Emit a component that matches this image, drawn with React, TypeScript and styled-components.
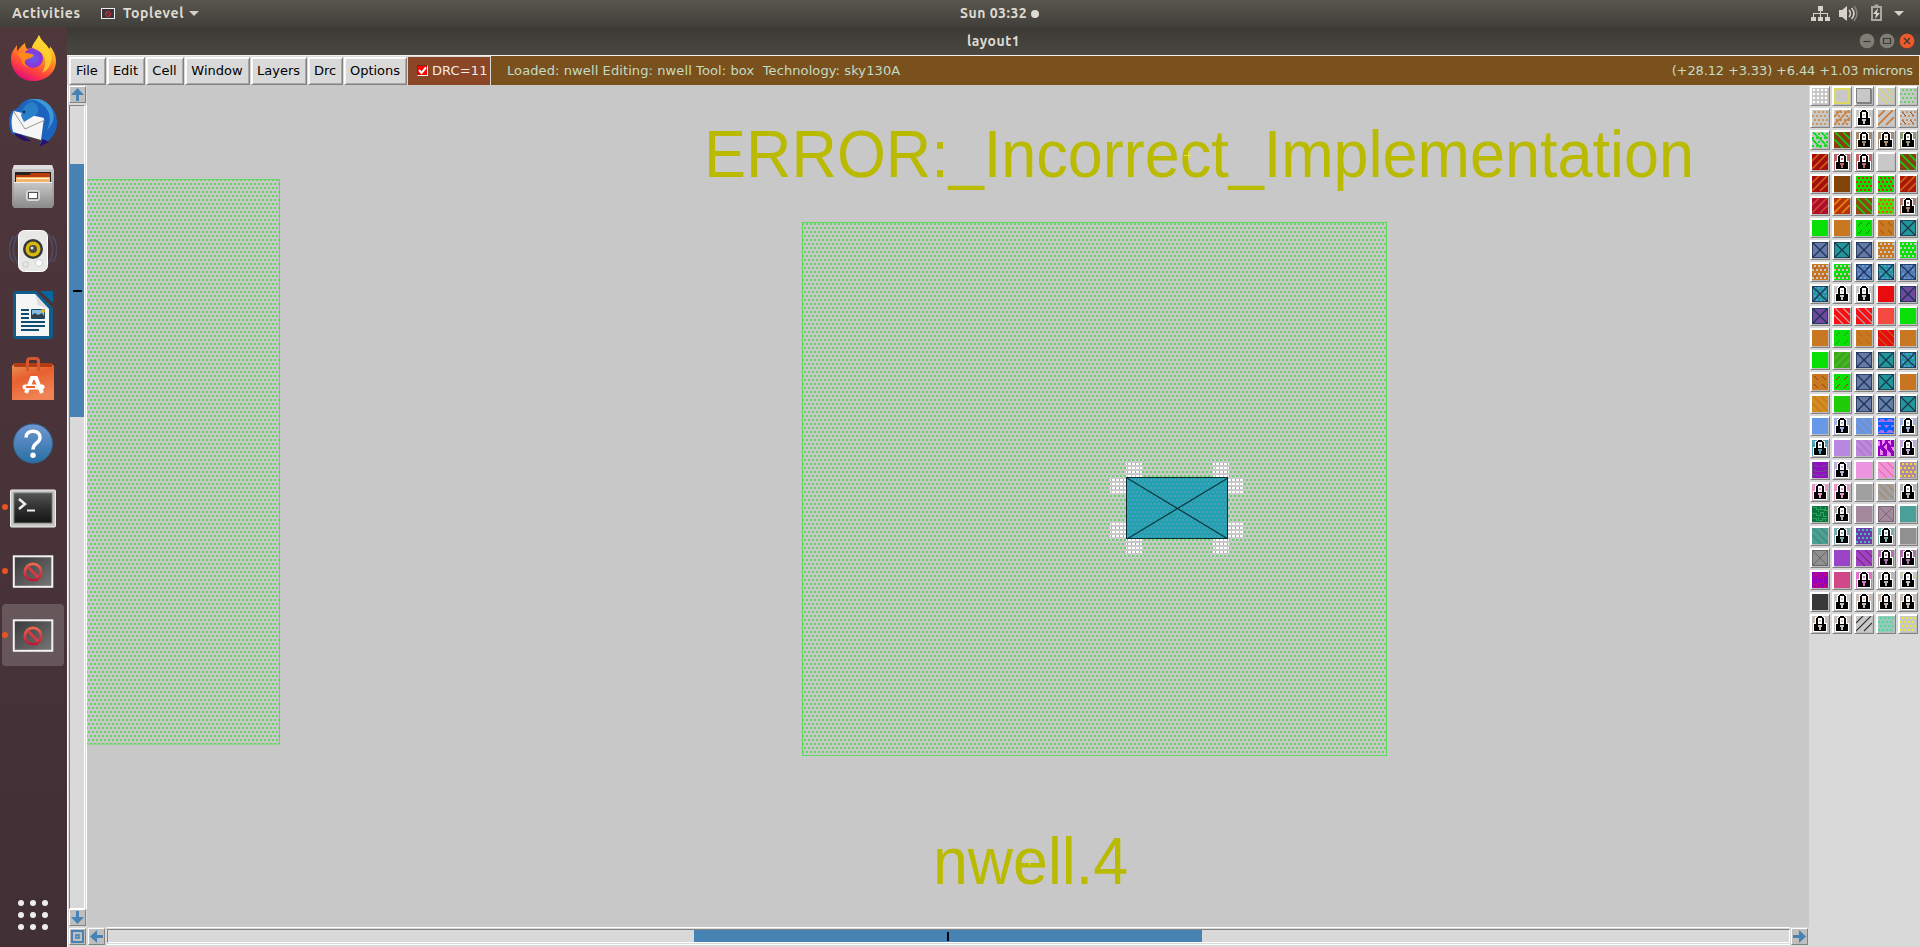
import React from 'react';
import styled, { createGlobalStyle } from 'styled-components';

const Global = createGlobalStyle`
  * { box-sizing: border-box; }
  html, body { margin: 0; padding: 0; overflow: hidden; background: #c8c8c8; }
  svg { display: block; }
`;

const Desktop = styled.div`
  width: 1920px; height: 947px; display: flex; flex-direction: column; overflow: hidden;
  font-family: "DejaVu Sans", sans-serif;
`;
const TopBar = styled.header`
  height: 27px; flex: none; display: grid; grid-template-columns: 960px 1fr auto; align-items: center;
  background: linear-gradient(#59564e, #413f3a);
  color: #dfdbd2; font: 600 14px/27px "Ubuntu", "Noto Sans", sans-serif; white-space: pre;
`;
const TopLeft = styled.div`display: flex; align-items: center; padding-left: 12px;`;
const Label = styled.span<{ $w: number; $ls?: number }>`
  width: ${p => p.$w}px; letter-spacing: ${p => p.$ls ?? 0}px;
`;
const AppIcon = styled.span`
  width: 14px; height: 11px; margin: 0 8px 0 21px; border: 1px solid #eee; background: #3a3436;
  display: grid; place-items: center;
`;
const Caret = styled.span`
  border: 5px solid transparent; border-top-color: #d3cfc6; border-bottom: 0; margin-left: 5px;
`;
const Clock = styled.div`display: flex; align-items: center;`;
const Dot = styled.span`width: 8px; height: 8px; border-radius: 50%; background: #dfdbd2; margin-left: 2px;`;

const Body = styled.div`flex: 1; min-height: 0; display: flex;`;
const Dock = styled.nav`
  width: 67px; flex: none; display: flex; flex-direction: column; align-items: center;
  background: linear-gradient(#4f373b, #412f36); padding: 1px 1px 17px 0;
`;
const DockSlot = styled.div<{ $active?: boolean }>`
  width: 62px; height: 62px; margin: 0 0 2px; position: relative; display: grid; place-items: center;
  border-radius: 4px; background: ${p => (p.$active ? 'rgba(255,255,255,.18)' : 'transparent')};
  & > i { position: absolute; left: 0; top: 28px; width: 6px; height: 6px; border-radius: 50%; background: #e95420; }
`;
const AppsGrid = styled.div`
  margin-top: auto; display: grid; grid-template-columns: repeat(3, 6px); gap: 6px;
  & > b { width: 6px; height: 6px; border-radius: 50%; background: #eeeeec; }
`;

const Win = styled.main`flex: 1; display: flex; flex-direction: column; background: #d9d9d9;`;
const TitleBar = styled.div`
  height: 28px; flex: none; display: grid; grid-template-columns: 1fr 120px 1fr; align-items: center;
  background: linear-gradient(#3a3935, #4a4842); color: #dfdbd2;
  font: 600 14px/28px "Ubuntu", "Noto Sans", sans-serif; text-align: center; letter-spacing: .5px;
`;
const WinButtons = styled.div`display: flex; justify-content: flex-end; gap: 4px; padding-right: 5px;`;
const MenuBar = styled.div`
  height: 30px; flex: none; display: flex; border-top: 1px solid #f2f2f2; padding: 0 1px 0 2px;
  font-size: 13px; color: #000;
`;
const MenuButton = styled.div<{ $w: number }>`
  width: ${p => p.$w}px; height: 28px; line-height: 25px; text-align: center; margin: 1px 1px 0 0; padding-right: 1px;
  border: 1px solid; border-color: #fff #828282 #828282 #fff; box-shadow: inset 1px 1px #f6f6f6, inset -1px -1px #a8a8a8;
`;
const Drc = styled.div`
  width: 83px; height: 28px; margin: 1px 0 0; display: flex; align-items: center; gap: 4px; padding: 0 0 2px 9px;
  background: #8b4626; color: #f4ece6; white-space: nowrap; border-right: 1px solid #d9d9d9; letter-spacing: .1px;
`;
const CheckBox = styled.span`
  width: 11px; height: 11px; background: #f00; border: 1px solid; border-color: #842222 #eee #eee #842222;
`;
const Status = styled.div`
  flex: 1; display: flex; justify-content: space-between; align-items: center; padding: 0 6px 1px 16px;
  background: #7a511c; color: #c3dcc8; white-space: pre;
`;
const StatusText = styled.span<{ $ls: number }>`letter-spacing: ${p => p.$ls}px;`;

const Work = styled.div`flex: 1; min-height: 0; display: flex;`;
const Editor = styled.div`
  width: 1742px; display: grid; grid-template-columns: 20px 1722px; grid-template-rows: 842px 20px;
`;
const VScroll = styled.div`
  display: flex; flex-direction: column; padding: 1px 0 0 1px; align-items: flex-start; border-left: 1px solid #fff;
`;
const HScroll = styled.div`display: flex; padding: 1px 0 0 1px;`;
const Corner = styled.div`padding: 1px 0 0 1px; border-left: 1px solid #fff; background: #d9d9d9;`;
const ScrollButton = styled.div`
  width: 17px; height: 17px; flex: none; background: #bebebe;
  border: 1px solid; border-color: #fff #828282 #828282 #fff; display: grid; place-items: center;
`;
const VTrough = styled.div`
  width: 18px; height: 804px; margin-top: 2px; border: 1px solid #fff; border-width: 0 1px 0 0; padding-right: 1px;
`;
const HTrough = styled.div`
  width: 1683px; height: 18px; margin: -1px 1px 0 2px; border: 1px solid #fff; border-width: 1px 0; padding-top: 1px; padding-bottom: 1px;
`;
const Sunken = styled.div<{ $row?: boolean }>`
  width: 100%; height: 100%; display: flex; flex-direction: ${p => (p.$row ? 'row' : 'column')};
  border: 1px solid; border-color: #828282 #fff #fff #828282;
`;
const Thumb = styled.div<{ $before: number; $size: number; $row?: boolean }>`
  display: grid; place-items: center; background: #4682b4; flex: none;
  ${p => (p.$row
    ? `width:${p.$size}px;height:100%;margin-left:${p.$before}px;`
    : `height:${p.$size}px;width:100%;margin-top:${p.$before}px;`)}
  & > u { background: #000; width: ${p => (p.$row ? 2 : 9)}px; height: ${p => (p.$row ? 9 : 2)}px; }
`;
const Palette = styled.aside`
  padding: 1px 0 0 1px; display: grid; grid-template-columns: repeat(5, 20px); grid-auto-rows: 20px;
  gap: 2px; align-content: start;
`;
const Swatch = styled.div`
  width: 20px; height: 20px; padding: 1px; background: #dedede;
  border: 1px solid; border-color: #fff #828282 #828282 #fff; box-shadow: inset 1px 1px #fff, inset -1px -1px #bcbcbc;
`;

/* Layer codes: kind, fill colour, pattern colour.
   p plain, d dots, h holes, / and \\ stripes, s and b sparse stripes, x contact, y dotted contact, l lock, f frame */
const G = '#c8c8c8', GR = '#08e008', OR = '#c87820', SL = '#6878a8', TE = '#209898', BR = '#884010';
type Cell = [string, string, string?];
const layers: Cell[] = [
  ['D', G, '#fff'], ['f', G, '#dcd860'], ['f', G, '#808080'], ['\\', G, '#dcd860'], ['d', G, '#60d868'],
  ['d', G, '#cc965c'], ['/d', G, '#cc8444'], ['l', G, '#c8c890'], ['/', G, '#c87830'], ['bd', G, '#cc9468'],
  ['\\d', G, '#10dc20'], ['\\', BR, '#10d010'], ['l', '#a08870'], ['l', '#a88c70'], ['l', '#909c78'],
  ['/', '#a80c0c', '#c86418'], ['l', '#bc6468'], ['l', '#bc6468'], ['p', G], ['\\', BR, '#10d010'],
  ['/', '#a80c0c', '#c86418'], ['p', '#844408'], ['d', GR, '#e82010'], ['bd', GR, '#e82010'], ['/', '#ac1808', '#c86418'],
  ['/', '#b00c28', '#c84838'], ['/', '#b83408', '#e08818'], ['\\', '#904810', '#10d010'], ['d', '#48e008', '#f05018'], ['l', '#b07c74'],
  ['p', GR], ['p', OR], ['s', GR, '#287808'], ['b', OR, '#a04c10'], ['x', TE],
  ['x', SL], ['x', TE], ['x', SL], ['h', OR, G], ['h', GR, G],
  ['hs', OR, G], ['hs', GR, G], ['y', '#5878b0'], ['y', TE], ['y', '#5878b0'],
  ['y', TE], ['l', G], ['l', G], ['p', '#e80c10'], ['x', '#7048a0'],
  ['x', '#7048a0'], ['\\', '#f81010', '#d8a8b0'], ['\\', '#f81010', '#b8a8c0'], ['p', '#f44a40'], ['p', GR],
  ['p', OR], ['s', GR, '#20a010'], ['b', OR, '#b46018'], ['\\', '#e80c10', '#c06010'], ['p', OR],
  ['p', GR], ['/', '#40a420', '#44c020'], ['x', SL], ['x', TE], ['y', TE],
  ['b', OR, '#904010'], ['s', GR, '#883000'], ['x', SL], ['x', TE], ['p', '#c87420'],
  ['\\', '#d48c20', '#c07820'], ['p', '#20cc08'], ['x', SL], ['x', '#6480a8'], ['x', TE],
  ['p', '#6898e8'], ['l', '#a0b4e0'], ['\\', '#6898e8', '#8088a8'], ['t', '#0860ff', '#a070e8'], ['l', '#a0b4e0'],
  ['l', '#48a0b0', '#a0a0e8'], ['p', '#b888e0'], ['\\', '#b888e0', '#bc70b4'], ['v', '#9000c0', '#ec88f0'], ['l', '#c0a8d8'],
  ['w', '#9010c0', '#704890'], ['l', '#c0b0d8'], ['p', '#ec94e0'], ['\\', '#ec94e0', '#f07090'], ['d', '#b088a8', '#e8e020'],
  ['l', '#e898c8'], ['l', '#e898c8'], ['p', '#a0a0a0'], ['\\', '#a0a0a0', '#a88864'], ['l', '#b4b4b4'],
  ['n', '#087838', '#30a068'], ['l', '#b0b0b0'], ['p', '#a4889c'], ['X', '#a4889c', '#7c6878'], ['p', '#48a098'],
  ['\\', '#48a098', '#508460'], ['l', '#78b0b0'], ['d', '#7038b0', '#40c0a8'], ['l', '#78b0b0'], ['p', '#909090'],
  ['X', '#909090', '#686868'], ['p', '#9c44c8'], ['\\', '#9c44c8', '#902070'], ['l', '#b070b0'], ['l', '#b070b0'],
  ['o', '#9800b8', '#c00880'], ['p', '#d04888'], ['l', '#e070c8'], ['l', '#b8b8b8'], ['l', G, '#d8d840'],
  ['p', '#383838'], ['l', G], ['l', '#c8bcb4'], ['l', '#c8bcb4'], ['l', '#c8bcb4'],
  ['l', '#c8c0b8'], ['l', '#c8c0b8'], ['/', G, '#303030'], ['d', '#98c8b8', '#50d8a0'], ['d', G, '#e8e830'],
];
const boldInks = ['#10d010', '#c86418', '#e08818', '#c84838', '#c87830', '#cc8444', '#10dc20', '#44c020'];

function LayerIcon({ cell: [kind, fill, ink] }: { cell: Cell }) {
  const k = kind;
  const line = boldInks.includes(ink ?? '') ? 1.7 : 1.1;
  const dots: React.ReactNode[] = [];
  const full = k.includes('D');
  if (full || k.includes('d') || k === 'y' || k.includes('h')) {
    const c = k === 'y' ? '#5898e8' : ink;
    for (let r = 0; r < 4; r++)
      for (let i = 0; i < 4; i++)
        dots.push(<rect key={`${r}-${i}`} x={i * 4 + (full ? 1 : r % 2 ? 0 : 2)} y={r * 4 + 1} width="2" height="2" fill={c} />);
  }
  if (k === 'l')
    return (
      <svg width="16" height="16" shapeRendering="crispEdges">
        <rect width="16" height="16" fill={fill} />
        {ink && <path d="M1 1l3 3M12 12l4 4M12 2l4 4" stroke={ink} />}
        <path d="M5 0h6v1h2v6h2v9H1V7h2V1h2z" fill="#fff" />
        <path d="M6 0h4v1h1v1h1v6h2v7H2V8h2V2h1V1h1zM6 2v6h4V2z" fill="#000" fillRule="evenodd" />
        <path d="M6 2h4v6H6z" fill="#fff" />
        <path d="M7 4h2v2H7zM6 9h4v2H9v3H7v-3H6z" fill={fill} />
      </svg>
    );
  return (
    <svg width="16" height="16" shapeRendering="crispEdges">
      <rect width="16" height="16" fill={fill} />
      {dots}
      {k === 'f' && <path d={ink === '#808080' ? 'M.5 .5h14v14h-14zM15.5 1v15M1 15.5h15' : 'M1 1h14v14H1z'} fill="none" stroke={ink} strokeWidth={ink === '#808080' ? 1 : 2} />}
      <g shapeRendering="auto">
        {k.includes('/') && <path d="M0 7L7 0M0 15L15 0M8 15l8-8" stroke={ink} strokeWidth={line} />}
        {k.includes('\\') && <path d="M9 0l7 7M1 0l15 15M0 7l9 9" stroke={ink} strokeWidth={line} />}
        {k.includes('s') && <path d="M2 6l4-4M10 6l4-4M2 14l4-4M10 14l4-4" stroke={k === 'hs' ? '#b84840' : ink} />}
        {k.includes('b') && <path d="M2 2l4 4M10 2l4 4M2 10l4 4M10 10l4 4" stroke={k === 'bd' ? '#a04c20' : ink} />}
        {(k === 'x' || k === 'y') && <path d="M0 0L16 16M16 0L0 16" fill="none" stroke="#1c3454" strokeWidth="1.300" />}
      </g>
      {(k === 'x' || k === 'y') && <path d="M.5 .5h15v15H.5z" fill="none" stroke="#1c3454" strokeOpacity=".8" />}
      {k === 'X' && <path d="M0 0L16 16M16 0L0 16M.5 .5h15v15H.5z" fill="none" stroke={ink} />}
      {k === 't' && <path d="M2 1h4l2 3H0zM10 1h4l2 3H8zM0 7h3v2H0zM5 7h6l-3 3zM13 7h3v2h-3zM2 12h4l1 3H0zM10 12h4l2 3H8z" fill={ink} />}
      {k === 'v' && <path d="M0 1h2v5H0zM4 0h3v2l-2 3H4zM10 1l3-1v6l-3-3zM6 6l3-2v6L6 8zM2 9l3 3v3H2zM9 10l4 3v3H9zM13 7h3v5z" fill={ink} />}
      {k === 'w' && <path d="M0 3h5v1h6v-1h5M0 8h3v1h9v-1h4M0 12h5v1h6v-1h5M.5 0v16" stroke={ink} fill="none" />}
      {k === 'n' && <path d="M1 1h3v2h2v3M8 0v3h4v2M13 1v3h3M0 7h4v2h4V6h3v4h4M1 12h3v3M6 11v3h4v-2h3v3" stroke={ink} fill="none" />}
      {k === 'o' && <path d="M5 5h6v6H5zM1 1h3v2H1zM12 1h3v2h-3zM1 12h3v3H1zM12 12h3v3h-3zM7 1h2v1H7zM7 14h2v1H7z" stroke={ink} fill="none" />}
    </svg>
  );
}

const Firefox = () => (
  <svg width="48" height="48" viewBox="0 0 48 48">
    <defs>
      <linearGradient id="fx" x1=".8" y1="0" x2=".3" y2="1"><stop offset="0" stopColor="#fff44f" /><stop offset=".4" stopColor="#ff9a20" /><stop offset=".75" stopColor="#ff4040" /><stop offset="1" stopColor="#e00a80" /></linearGradient>
      <radialGradient id="fp"><stop offset="0" stopColor="#6060f0" /><stop offset="1" stopColor="#9030d0" /></radialGradient>
    </defs>
    <path d="M30 0c2 6 8 9 10 14 2-1 1-3 1-3 4 5 6 10 6 15 0 12-10 20-23 20S2 36 2 23C2 17 6 13 8 10v6c2-2 5-6 8-8 0 3 1 4 2 6l5-1C24 8 28 5 30 0z" fill="url(#fx)" />
    <circle cx="24" cy="23" r="10" fill="url(#fp)" />
    <path d="M8 19c5-3 11-1 17 1-2 4-7 3-9 6-1 3 2 6 6 7-7-1-10-5-10-10z" fill="#ff8a18" />
    <path d="M30 0c1 7 10 10 12 18 2 9-2 17-9 20 5-8 4-17-2-21-3-2-5-3-8-4C24 8 28 5 30 0z" fill="#ffd730" opacity=".8" />
  </svg>
);
const Thunderbird = () => (
  <svg width="48" height="48" viewBox="0 0 48 48">
    <path d="M10 8C14 0 24-2 29 2c12 1 20 10 19 24-1 8-5 13-10 17l-8 4 3-7L3 35C-1 27-1 18 3 12z" fill="#1d62bd" />
    <path d="M17 4c4-4 10-4 14 0 9 5 13 15 7 27 10-9 8-21-1-28C29-2 21-1 17 4z" fill="#3a98d8" />
    <path d="M5 12l17 4 13 3-3 22L4 33C2 25 2 18 5 12z" fill="#f6f6f6" />
    <path d="M5 13l11 17 20-9" fill="none" stroke="#999" />
    <path d="M5 34c4 6 10 9 17 8l-9-6zM34 40l-4 8 10-5z" fill="#28106a" />
    <path d="M12 16C14 8 18 3 24 3c4 2 7 7 4 12l-13 8-2-4z" fill="#2a80c8" />
    <circle cx="15" cy="13" r="1.4" fill="#143060" />
  </svg>
);
const Files = () => (
  <svg width="48" height="48" viewBox="0 0 48 48">
    <defs><linearGradient id="fl" x1="0" y1="0" x2="0" y2="1"><stop offset="0" stopColor="#c9c9c9" /><stop offset="1" stopColor="#8c8c8c" /></linearGradient></defs>
    <path d="M5 2h38l2 5v35l-2 3H5l-2-3V7z" fill="url(#fl)" /><path d="M5 2h38l1 4H4z" fill="#ddd" />
    <path d="M6 9h36v10H6z" fill="#292020" /><path d="M7 12h14l1-2h19v8H7z" fill="#b83c0c" /><path d="M7 14h34v5H7z" fill="#f5b46a" /><path d="M8 15h32v1H8z" fill="#fff2d0" />
    <path d="M5 19h38v25H5z" fill="url(#fl)" /><path d="M5 19h38v1H5z" fill="#eee" />
    <rect x="17.5" y="27.5" width="13" height="10" rx="2" fill="#c8c8c8" stroke="#ddd" /><rect x="19.5" y="29.5" width="9" height="6" fill="#fff" stroke="#555" />
  </svg>
);
const Rhythmbox = () => (
  <svg width="48" height="48" viewBox="0 -1 48 48">
    <path d="M5 8C-2 17-1 28 5 34M9 6C3 16 3 27 9 36M43 8c7 9 6 20 0 26M39 6c6 10 6 21 0 30" fill="none" stroke="#5874a8" strokeWidth="2" opacity=".35" />
    <rect x="9.5" y="2.5" width="29" height="41" rx="6" fill="#e8e8e6" stroke="#fff" />
    <circle cx="24" cy="21" r="10" fill="#363838" /><circle cx="24" cy="21" r="7.5" fill="#d8b80c" /><circle cx="24" cy="21" r="4" fill="#4a493c" /><circle cx="23" cy="20" r="1.5" fill="#ddd" />
    <circle cx="30" cy="35" r="3.5" fill="#fff" stroke="#ccc" /><rect x="14" y="34" width="5" height="5" rx="1" fill="none" stroke="#ccc" />
  </svg>
);
const Writer = () => (
  <svg width="48" height="48" viewBox="0 0 48 48">
    <path d="M6 0h21l17 17v29l-2 2H6l-2-2V2z" fill="#0e5d8c" /><path d="M31 0h13v12z" fill="#05679f" /><path d="M7 3h19l14 15v27H7z" fill="#f5f5f5" /><path d="M26 3l14 15-11-4z" fill="#ddd" />
    <path d="M12 19h8M12 23h8M12 27h8M12 31h24M12 35h24M12 39h18" stroke="#104c70" strokeWidth="2" />
    <path d="M22.500 18.500h13v9h-13z" fill="#88bce0" stroke="#104c70" /><path d="M23 27v-3l3-2 3 2 4-2 3 5z" fill="#33424a" /><circle cx="34" cy="20" r="2" fill="#f0b028" />
  </svg>
);
const Software = () => (
  <svg width="48" height="48" viewBox="0 -1 48 48">
    <defs><linearGradient id="sw" x1="0" y1="0" x2=".4" y2="1"><stop offset="0" stopColor="#e89558" /><stop offset=".45" stopColor="#e86030" /><stop offset="1" stopColor="#f18254" /></linearGradient></defs>
    <path d="M3 10l3-3h36l3 3v34H3z" fill="url(#sw)" /><path d="M5 7h38v4H5z" fill="#b43d15" />
    <path d="M18.500 15V5q0-2.500 3-2.500h5q3 0 3 2.500v10" fill="none" stroke="#d4592e" strokeWidth="3" />
    <path d="M17 37l6-15h4l6 15" fill="none" stroke="#fff" strokeWidth="4" /><path d="M16 31h17" stroke="#fff" strokeWidth="5" strokeLinecap="round" /><path d="M17 31h9" stroke="#e8622c" strokeWidth="2" />
  </svg>
);
const Help = () => (
  <svg width="48" height="48" viewBox="0 0 48 48">
    <defs><linearGradient id="hp" x1="0" y1="0" x2="0" y2="1"><stop offset="0" stopColor="#7297d2" /><stop offset="1" stopColor="#2670a3" /></linearGradient></defs>
    <circle cx="24" cy="24.500" r="19.500" fill="url(#hp)" stroke="#356599" />
    <path d="M17 18.500c0-8.500 14-8.500 14 0 0 6-7 5-7 12" fill="none" stroke="#fff" strokeWidth="3.500" /><circle cx="24" cy="36.300" r="2.700" fill="#fff" />
  </svg>
);
const Terminal = () => (
  <svg width="48" height="48" viewBox="0 0 48 48">
    <defs><linearGradient id="tm" x1="0" y1="0" x2="0" y2="1"><stop offset="0" stopColor="#555" /><stop offset=".5" stopColor="#303030" /><stop offset="1" stopColor="#151515" /></linearGradient></defs>
    <rect x="1.500" y="7" width="45" height="37" rx="1" fill="#c8c8c4" stroke="#eee" /><rect x="5" y="10" width="38" height="30" fill="url(#tm)" stroke="#777" />
    <path d="M10 16l6 5-6 5" fill="none" stroke="#eee" strokeWidth="2.500" /><path d="M18 27.500h8" stroke="#eee" strokeWidth="2" />
  </svg>
);
const Blocked = () => (
  <svg width="48" height="48" viewBox="0 0 48 48">
    <defs><linearGradient id="bk" x1="0" y1="0" x2="1" y2="1"><stop offset="0" stopColor="#383838" /><stop offset="1" stopColor="#777" /></linearGradient>
      <linearGradient id="br" x1="0" y1="0" x2="0" y2="1"><stop offset="0" stopColor="#ec6a50" /><stop offset="1" stopColor="#bc1838" /></linearGradient></defs>
    <rect x="4.800" y="9.300" width="38.500" height="30.500" fill="url(#bk)" stroke="#f2f2f2" strokeWidth="2" />
    <circle cx="24" cy="25" r="8.200" fill="none" stroke="url(#br)" strokeWidth="2.800" /><path d="M18.500 19.500l11 11" stroke="#d83a3e" strokeWidth="2.800" />
  </svg>
);

const Arrow = ({ turn }: { turn: number }) => (
  <svg width="15" height="15" viewBox="0 0 15 15"><path d="M7.500 1L14 8H9v6H6V8H1z" fill="#4682b4" transform={`rotate(${turn} 7.500 7.500)`} /></svg>
);

const TrayIcons = styled.div`display: flex; align-items: center; padding-right: 8px;`;
const Tray = () => (
  <TrayIcons>
    <svg width="107" height="27" fill="#d6d2c9">
      <path d="M13 6h5v5h-2v2h7v4h2v4h-5v-4h2v-3h-6v3h2v4h-5v-4h2v-3H9v3h2v4H6v-4h2v-4h7v-2h-2z" />
      <path d="M34 10h3l5-4v15l-5-4h-3z" /><path d="M44 10q3 3.500 0 7M46.500 8q5 5.500 0 11" fill="none" stroke="#d6d2c9" strokeWidth="1.500" /><path d="M49 6q6 7 0 15" fill="none" stroke="#88857d" strokeWidth="1.500" />
      <g transform="translate(2 0)"><path d="M65 7h9v13h-9zM67.500 5.500h4" fill="none" stroke="#aaa79f" strokeWidth="2" /><path d="M71 8l-5 6h3l-1 5 5-6h-3z" /></g>
      <path d="M89 11h10l-5 5z" />
    </svg>
  </TrayIcons>
);

const WindowButton = ({ kind }: { kind: 'min' | 'max' | 'close' }) => (
  <svg width="16" height="16" viewBox="0 0 16 16">
    <circle cx="8" cy="8" r="7.800" fill={kind === 'close' ? '#ea5a2c' : '#807d74'} stroke="#34332f" strokeWidth=".6" />
    <path d={kind === 'min' ? 'M4.500 8.500h7' : kind === 'max' ? 'M4.500 5.500h7v5h-7z' : 'M5 5l6 6M11 5l-6 6'} fill="none" stroke="#3a3833" strokeWidth="1.200" />
  </svg>
);

const Layout = () => (
  <svg width="1722" height="842" viewBox="87 85 1722 842">
    <defs>
      <pattern id="nwell" width="4" height="8" patternUnits="userSpaceOnUse">
        <path d="M0 3h2v2H0zM2 7h2v1H2zM2 0h2v1H2z" fill="#60d860" shapeRendering="crispEdges" />
      </pattern>
      <pattern id="tap" width="4" height="8" patternUnits="userSpaceOnUse">
        <path d="M0 3h2v2H0zM2 7h2v1H2zM2 0h2v1H2z" fill="#469ec8" shapeRendering="crispEdges" />
      </pattern>
      <pattern id="grid" width="4" height="4" patternUnits="userSpaceOnUse">
        <path d="M0 3h2v1H0zM0 0h2v1H0zM2 3h1v1H2zM2 0h1v1H2z" fill="#fff" shapeRendering="crispEdges" />
      </pattern>
    </defs>
    <rect x="87" y="85" width="1722" height="842" fill="#c8c8c8" />
    <g fill="url(#nwell)" stroke="#60d860">
      <rect x="80.500" y="179.500" width="199" height="564.500" />
      <rect x="802.500" y="222.500" width="584" height="533" />
    </g>
    <g fill="url(#grid)">
      {[[1126, 461], [1213, 461], [1126, 539], [1213, 539], [1110, 477], [1228, 477], [1110, 523], [1228, 523]].map(([x, y]) => (
        <rect key={`${x}-${y}`} x={x} y={y} width="16" height="16" />
      ))}
    </g>
    <rect x="1126.500" y="477.500" width="101" height="61" fill="#24a2ac" />
    <rect x="1126.500" y="477.500" width="101" height="61" fill="url(#tap)" stroke="#082c30" />
    <path d="M1127 478l101 61M1228 478l-101 61" stroke="#083c44" strokeWidth="1.300" />
    <g fill="#baba00" fontFamily="Liberation Sans, Arial, sans-serif" fontSize="66.500">
      <text x="704" y="177" textLength="990" lengthAdjust="spacingAndGlyphs">ERROR:_Incorrect_Implementation</text>
      <text x="933" y="883.500" textLength="195" lengthAdjust="spacingAndGlyphs">nwell.4</text>
    </g>
    <path d="M1025 860.500h8M1029.500 857v8M1184 155.500h8M1188.500 151v8" stroke="#e4e440" />
  </svg>
);

const menus: [string, number][] = [['File', 37], ['Edit', 38], ['Cell', 38], ['Window', 65], ['Layers', 56], ['Drc', 35], ['Options', 63]];
const dock: [React.FC, boolean, boolean][] = [
  [Firefox, false, false], [Thunderbird, false, false], [Files, false, false], [Rhythmbox, false, false], [Writer, false, false],
  [Software, false, false], [Help, false, false], [Terminal, true, false], [Blocked, true, false], [Blocked, true, true],
];

export default function App() {
  return (
    <Desktop>
      <Global />
      <TopBar>
        <TopLeft>
          <Label $w={68} $ls={0.65}>Activities</Label>
          <AppIcon><svg width="8" height="8"><circle cx="4" cy="4" r="2.500" fill="none" stroke="#d83040" /><path d="M2 2l4 4" stroke="#d83040" /></svg></AppIcon>
          <Label $w={61} $ls={0.6}>Toplevel</Label>
          <Caret />
        </TopLeft>
        <Clock><Label $w={69} $ls={0.5}>Sun 03:32</Label><Dot /></Clock>
        <Tray />
      </TopBar>
      <Body>
        <Dock>
          {dock.map(([Icon, running, active], i) => (
            <DockSlot key={i} $active={active}>{running && <i />}<Icon /></DockSlot>
          ))}
          <AppsGrid>{Array.from({ length: 9 }, (_, i) => <b key={i} />)}</AppsGrid>
        </Dock>
        <Win>
          <TitleBar>
            <span /><span>layout1</span>
            <WinButtons><WindowButton kind="min" /><WindowButton kind="max" /><WindowButton kind="close" /></WinButtons>
          </TitleBar>
          <MenuBar>
            {menus.map(([name, w]) => <MenuButton key={name} $w={w}>{name}</MenuButton>)}
            <Drc>
              <CheckBox><svg width="9" height="9"><path d="M1 4l2.500 3L8 1.500" fill="none" stroke="#fff" strokeWidth="2" /></svg></CheckBox>
              DRC=11
            </Drc>
            <Status>
              <StatusText $ls={0.1}>Loaded: nwell Editing: nwell Tool: box  Technology: sky130A</StatusText>
              <StatusText $ls={-0.13}>(+28.12 +3.33) +6.44 +1.03 microns</StatusText>
            </Status>
          </MenuBar>
          <Work>
            <Editor>
              <VScroll>
                <ScrollButton><Arrow turn={0} /></ScrollButton>
                <VTrough><Sunken><Thumb $before={58} $size={253}><u /></Thumb></Sunken></VTrough>
                <ScrollButton><Arrow turn={180} /></ScrollButton>
              </VScroll>
              <Layout />
              <Corner>
                <ScrollButton>
                  <svg width="13" height="13"><path d="M1 1h11v11H1z" fill="none" stroke="#4682b4" strokeWidth="2" /><path d="M5 5h3v3H5z" fill="none" stroke="#4682b4" strokeWidth="1.500" /></svg>
                </ScrollButton>
              </Corner>
              <HScroll>
                <ScrollButton><Arrow turn={270} /></ScrollButton>
                <HTrough><Sunken $row><Thumb $row $before={586} $size={508}><u /></Thumb></Sunken></HTrough>
                <ScrollButton><Arrow turn={90} /></ScrollButton>
              </HScroll>
            </Editor>
            <Palette>
              {layers.map((cell, i) => <Swatch key={i}><LayerIcon cell={cell} /></Swatch>)}
            </Palette>
          </Work>
        </Win>
      </Body>
    </Desktop>
  );
}
